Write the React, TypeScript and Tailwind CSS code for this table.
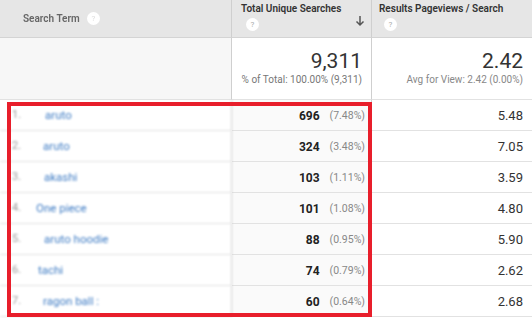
import React from 'react';

interface Row {
  term: string;
  indent: string;
  searches: string;
  pct: string;
  pageviews: string;
}

const rows: Row[] = [
  { term: 'aruto', indent: 'ml-[23px]', searches: '696', pct: '(7.48%)', pageviews: '5.48' },
  { term: 'aruto', indent: 'ml-[21px]', searches: '324', pct: '(3.48%)', pageviews: '7.05' },
  { term: 'akashi', indent: 'ml-[22px]', searches: '103', pct: '(1.11%)', pageviews: '3.59' },
  { term: 'One piece', indent: 'ml-[14px]', searches: '101', pct: '(1.08%)', pageviews: '4.80' },
  { term: 'aruto hoodie', indent: 'ml-[22px]', searches: '88', pct: '(0.95%)', pageviews: '5.90' },
  { term: 'tachi', indent: 'ml-[16px]', searches: '74', pct: '(0.79%)', pageviews: '2.62' },
  { term: 'ragon ball :', indent: 'ml-[21px]', searches: '60', pct: '(0.64%)', pageviews: '2.68' },
];

const Help: React.FC<{ dim?: boolean }> = ({ dim }) => (
  <span
    className={`flex items-center justify-center w-[13px] h-[13px] rounded-full bg-white text-[8px] leading-none ${
      dim ? 'text-[#ddd]' : 'text-[#aaa]'
    }`}
  >
    ?
  </span>
);

const App: React.FC = () => {
  return (
    <div
      className="relative w-[532px] h-[318px] overflow-hidden bg-white text-[#333]"
      style={{ fontFamily: 'Roboto, "Liberation Sans", sans-serif' }}
    >
      <div className="grid grid-cols-[232px_140px_160px]">
        {/* header */}
        <div className="h-[38px] bg-[#e6e6e6] border-r border-[#cfcfcf] border-b border-b-[#d4d4d4] flex items-center pl-[23px] gap-[7px] blur-[0.7px]">
          <span className="text-[10px] font-semibold text-[#666]">Search Term</span>
          <Help dim />
        </div>
        <div className="h-[38px] bg-[#e6e6e6] border-r border-[#cfcfcf] border-b border-b-[#d4d4d4] relative pl-[9px] pt-[2px]">
          <div className="text-[10px] font-semibold text-[#333] leading-[14px]">Total Unique Searches</div>
          <div className="flex mt-[2px] pl-[5px]">
            <Help />
          </div>
          <svg className="absolute right-[6px] top-[15px]" width="10" height="12" viewBox="0 0 10 12">
            <path d="M5 1v9M1.5 6.5L5 10l3.5-3.5" stroke="#555" strokeWidth="1.5" fill="none" />
          </svg>
        </div>
        <div className="h-[38px] bg-[#e6e6e6] border-b border-b-[#d4d4d4] pl-[7px] pt-[2px]">
          <div className="text-[10px] font-semibold text-[#333] leading-[14px]">Results Pageviews / Search</div>
          <div className="flex mt-[2px] pl-[5px]">
            <Help />
          </div>
        </div>

        {/* summary */}
        <div className="h-[62px] bg-[#f7f7f7] border-r border-[#cfcfcf] border-b border-b-[#e2e2e2]" />
        <div className="h-[62px] border-r border-[#cfcfcf] border-b border-b-[#e2e2e2] flex flex-col items-end pr-[9px] pt-[11px]">
          <div className="text-[21px] leading-[24px] text-[#333]">9,311</div>
          <div className="text-[10px] leading-[14px] text-[#777] whitespace-nowrap">% of Total: 100.00% (9,311)</div>
        </div>
        <div className="h-[62px] border-b border-b-[#e2e2e2] flex flex-col items-end pr-[9px] pt-[11px]">
          <div className="text-[21px] leading-[24px] text-[#333]">2.42</div>
          <div className="text-[10px] leading-[14px] text-[#888] whitespace-nowrap">Avg for View: 2.42 (0.00%)</div>
        </div>

        {/* rows */}
        {rows.map((r, i) => (
          <React.Fragment key={i}>
            <div className="h-[31px] border-r border-[#cfcfcf] border-b border-b-[#e2e2e2] flex items-center pl-[12px] pt-[1px] blur-[0.8px]">
              <span className="text-[11px] text-[#999] w-[10px]">{i + 1}.</span>
              <span className={`text-[11.5px] text-[#3f7cc4] ${r.indent}`}>{r.term}</span>
            </div>
            <div className="h-[31px] bg-[#fafafa] border-r border-[#cfcfcf] border-b border-b-[#e2e2e2] flex items-center justify-end pr-[6px] pt-[1px]">
              <span className="text-[12px] font-bold text-[#222]">{r.searches}</span>
              <span className="text-[10.5px] text-[#888] ml-[10px]">{r.pct}</span>
            </div>
            <div className="h-[31px] border-b border-b-[#e2e2e2] flex items-center justify-end pr-[9px] pt-[1px]">
              <span className="text-[13px] text-[#333]">{r.pageviews}</span>
            </div>
          </React.Fragment>
        ))}
      </div>

      {/* highlight box */}
      <div className="absolute left-[7px] top-[102px] w-[365px] h-[215px] border-[4px] border-[#e81e2b]" />
    </div>
  );
};

export default App;
